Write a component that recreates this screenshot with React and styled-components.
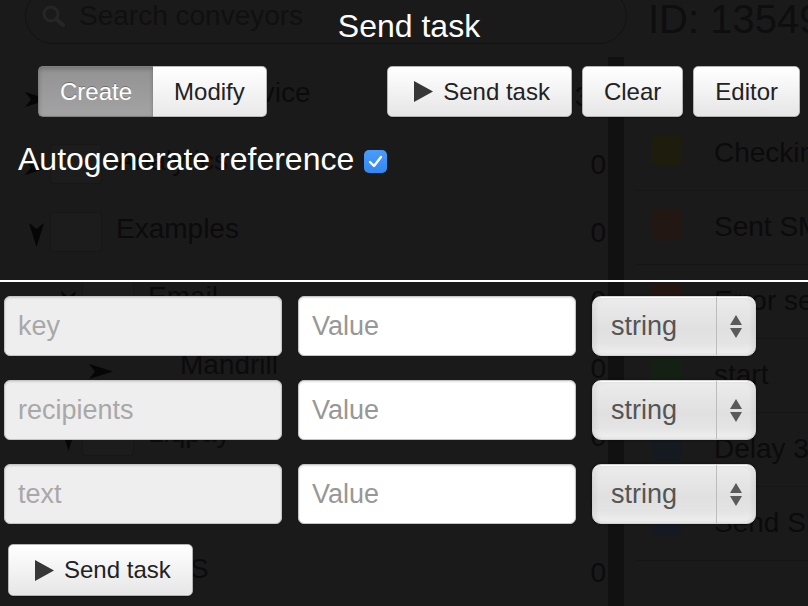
import React from 'react';
import styled, { createGlobalStyle } from 'styled-components';

const GlobalStyle = createGlobalStyle`
  html, body { margin: 0; padding: 0; background: #1a1a1a; }
  body { font-family: "Liberation Sans", Arial, Helvetica, sans-serif; }
  *, *::before, *::after { box-sizing: border-box; }
`;

const Screen = styled.div`
  position: relative;
  width: 808px;
  height: 606px;
  overflow: hidden;
  background: #1a1a1a;
  font-family: "Liberation Sans", Arial, sans-serif;
`;

/* ---------- dimmed application behind the dialog ---------- */

const Shell = styled.div`
  display: grid;
  grid-template-columns: 624px 184px;
  height: 100%;
`;

const LeftPane = styled.div`
  display: flex;
  flex-direction: column;
  min-width: 0;
`;

const SearchBar = styled.div`
  display: flex;
  align-items: center;
  gap: 14px;
  width: 602px;
  height: 56px;
  margin: -12px 0 0 25px;
  padding-left: 16px;
  border: 1px solid #121212;
  border-radius: 28px;
  position: relative;
  z-index: 1;
`;

const SearchText = styled.span`
  font-size: 28px;
  color: #101010;
  white-space: nowrap;
`;

const LeftBody = styled.div`
  display: flex;
  flex: 1;
  margin-top: 13px;
  min-height: 0;
`;

const Tree = styled.div`
  width: 608px;
  padding-top: 2px;
`;

const TreeRow = styled.div`
  display: flex;
  align-items: center;
  height: 68px;
  padding-left: ${(p) => 25 + p.$level * 32}px;
  padding-right: 2px;
  color: #0b0b0b;
  font-size: 28px;
  white-space: nowrap;
`;

const Toggle = styled.span`
  flex: none;
  width: 24px;
  height: 24px;
  margin: 12px 1px 0 0;
  display: flex;
  align-items: center;
  justify-content: center;
  transform: rotate(${(p) => (p.$open ? 90 : 0)}deg);
`;

const Folder = styled.span`
  flex: none;
  width: 52px;
  height: 40px;
  margin: 6px 14px 0 0;
  border-radius: 4px;
  background: ${(p) => (p.$leaf ? 'transparent' : '#1c1c1c')};
  border: 1px solid ${(p) => (p.$leaf ? 'transparent' : '#171717')};
`;

const TreeLabel = styled.span`
  flex: 1;
  min-width: 0;
  overflow: hidden;
`;

const Count = styled.span`
  padding-top: 8px;
`;

const Splitter = styled.div`
  width: 16px;
  background: #111111;
`;

const RightPane = styled.div`
  display: flex;
  flex-direction: column;
  overflow: hidden;
  min-width: 0;
`;

const IdTitle = styled.div`
  padding-left: 24px;
  font-size: 40px;
  line-height: 38px;
  color: #0e0e0e;
  white-space: nowrap;
`;

const StatusList = styled.div`
  margin-top: 79px;
  display: flex;
  flex-direction: column;
`;

const StatusRow = styled.div`
  display: flex;
  align-items: flex-start;
  height: 74px;
  margin-left: 12px;
  padding-left: 16px;
  border-bottom: 1px solid #151515;
  white-space: nowrap;
`;

const StatusSwatch = styled.span`
  flex: none;
  width: 30px;
  height: 30px;
  margin-top: 18px;
  border-radius: 5px;
  background: ${(p) => p.$color};
`;

const StatusLabel = styled.span`
  margin: 20px 0 0 32px;
  font-size: 28px;
  line-height: 32px;
  color: #0b0b0b;
`;

/* ---------- dialog ---------- */

const Overlay = styled.div`
  position: absolute;
  inset: 0;
  display: flex;
  flex-direction: column;
  color: #ffffff;
`;

const DialogHeader = styled.div`
  display: flex;
  flex-direction: column;
  height: 282px;
  border-bottom: 2px solid #ffffff;
`;

const DialogTitle = styled.h1`
  margin: 0;
  padding-left: 10px;
  font-size: 32px;
  font-weight: normal;
  line-height: 52px;
  text-align: center;
`;

const Toolbar = styled.div`
  display: flex;
  justify-content: space-between;
  align-items: center;
  margin-top: 14px;
  padding: 0 8px 0 38px;
`;

const ButtonGroup = styled.div`
  display: flex;
  gap: ${(p) => p.$gap || 0}px;
`;

const SegButton = styled.button`
  height: 51px;
  padding: 0 21px;
  font-family: inherit;
  font-size: 24px;
  cursor: pointer;
  border: 1px solid ${(p) => (p.$active ? '#808080' : '#b9b9b9')};
  color: ${(p) => (p.$active ? '#ffffff' : '#222222')};
  background: ${(p) =>
    p.$active
      ? 'linear-gradient(#929292, #a3a3a3)'
      : 'linear-gradient(#ffffff, #e9e9e9)'};
  box-shadow: ${(p) =>
    p.$active ? 'inset 0 2px 4px rgba(0,0,0,0.22)' : '0 1px 1px rgba(0,0,0,0.3)'};
  text-shadow: ${(p) => (p.$active ? '0 -1px 0 rgba(0,0,0,0.3)' : 'none')};
  &:first-child {
    border-radius: 5px 0 0 5px;
    border-right: none;
  }
  &:last-child {
    border-radius: 0 5px 5px 0;
    border-left: none;
  }
`;

const Button = styled.button`
  display: inline-flex;
  align-items: center;
  gap: 10px;
  height: ${(p) => p.$height || 51}px;
  padding: 0 21px 0 ${(p) => (p.$icon ? 26 : 21)}px;
  font-family: inherit;
  font-size: 24px;
  color: #222222;
  cursor: pointer;
  border: 1px solid #b3b3b3;
  border-radius: 5px;
  background: linear-gradient(#ffffff, #e6e6e6);
  box-shadow: 0 1px 1px rgba(0, 0, 0, 0.35);
`;

const AutoRow = styled.label`
  display: flex;
  align-items: flex-start;
  gap: 10px;
  height: 40px;
  margin-top: 22px;
  padding-left: 18px;
  font-size: 32px;
  line-height: 40px;
`;

const Checkbox = styled.span`
  width: 23px;
  height: 23px;
  margin-top: 11px;
  border-radius: 5px;
  background: linear-gradient(#4a9cfa, #3487f2);
  display: flex;
  align-items: center;
  justify-content: center;
`;

const DialogBody = styled.div`
  display: flex;
  flex-direction: column;
  padding: 14px 0 0 4px;
`;

const FieldRows = styled.div`
  display: flex;
  flex-direction: column;
  gap: 24px;
`;

const FieldRow = styled.div`
  display: grid;
  grid-template-columns: 278px 278px 164px;
  column-gap: 16px;
  height: 60px;
`;

const TextField = styled.input`
  height: 60px;
  width: 100%;
  padding: 0 13px;
  font-family: inherit;
  font-size: 27px;
  color: #333;
  border: 1px solid #c4c4c4;
  border-radius: 6px;
  background: ${(p) => (p.$muted ? '#eeeeee' : '#ffffff')};
  box-shadow: inset 0 1px 2px rgba(0, 0, 0, 0.12);
  outline: none;
  &::placeholder {
    color: ${(p) => (p.$muted ? '#a8a8a8' : '#979797')};
  }
`;

const TypeSelect = styled.div`
  display: flex;
  height: 60px;
  border: 1px solid #d2d2d2;
  border-radius: 9px;
  background: linear-gradient(#ececec 0%, #e0e0e0 55%, #e4e4e4 80%, #f0f0f0 100%);
  box-shadow: inset 0 1px 0 rgba(255, 255, 255, 0.9),
    inset 3px 0 4px rgba(0, 0, 0, 0.05), inset -3px 0 4px rgba(0, 0, 0, 0.05),
    0 0 3px rgba(0, 0, 0, 0.45);
  overflow: hidden;
`;

const SelectControl = styled.select`
  flex: 1;
  min-width: 0;
  height: 100%;
  padding: 0 0 0 18px;
  appearance: none;
  -webkit-appearance: none;
  border: none;
  background: transparent;
  font-family: inherit;
  font-size: 27px;
  color: #555555;
  outline: none;
`;

const SelectArrows = styled.span`
  flex: none;
  width: 39px;
  display: flex;
  align-items: center;
  justify-content: center;
  border-left: 1px solid #bcbcbc;
  pointer-events: none;
`;

const Footer = styled.div`
  display: flex;
  margin: 20px 0 0 4px;
`;

/* ---------- icons ---------- */

const Arrowhead = () => (
  <svg width="24" height="15" viewBox="0 0 24 15">
    <path d="M0 0 L24 7.5 L0 15 L6 7.5 Z" fill="#060606" />
  </svg>
);

const PlayIcon = () => (
  <svg width="19" height="21" viewBox="0 0 19 21">
    <polygon points="0,0 19,10.5 0,21" fill="#373737" />
  </svg>
);

const SearchIcon = () => (
  <svg width="23" height="22" viewBox="0 0 23 22">
    <circle cx="9" cy="9" r="7" fill="none" stroke="#262626" strokeWidth="3" />
    <line x1="14" y1="14" x2="21" y2="20" stroke="#262626" strokeWidth="4" strokeLinecap="round" />
  </svg>
);

const CheckMark = () => (
  <svg width="15" height="13" viewBox="0 0 15 13">
    <path d="M2 7 L6 11 L13 2" fill="none" stroke="#ffffff" strokeWidth="2.4" strokeLinecap="round" strokeLinejoin="round" />
  </svg>
);

const UpDown = () => (
  <svg width="12" height="23" viewBox="0 0 12 23">
    <polygon points="6,0 12,10 0,10" fill="#5a5a5a" />
    <polygon points="0,13 12,13 6,23" fill="#5a5a5a" />
  </svg>
);

/* ---------- data ---------- */

const treeRows = [
  { level: 0, open: false, label: 'Support service', count: '38' },
  { level: 0, open: false, label: 'Analytics', count: '0' },
  { level: 0, open: true, label: 'Examples', count: '0' },
  { level: 1, open: true, label: 'Email', count: '0' },
  { level: 2, open: false, leaf: true, label: 'Mandrill', count: '0' },
  { level: 1, open: true, label: 'Liqpay', count: '0' },
  { level: 2, open: false, leaf: true, label: 'Pay', count: '0' },
  { level: 1, open: false, label: 'SMS', count: '0' },
];

const statuses = [
  { color: '#1e1d0d', label: 'Checking status' },
  { color: '#231714', label: 'Sent SMS' },
  { color: '#251612', label: 'Error sending' },
  { color: '#132013', label: 'start' },
  { color: '#151a21', label: 'Delay 30 sec' },
  { color: '#151a22', label: 'Send SMS' },
];

const fields = ['key', 'recipients', 'text'];

export default function App() {
  return (
    <Screen>
      <GlobalStyle />
      <Shell>
        <LeftPane>
          <SearchBar>
            <SearchIcon />
            <SearchText>Search conveyors</SearchText>
          </SearchBar>
          <LeftBody>
            <Tree>
              {treeRows.map((r) => (
                <TreeRow key={r.label} $level={r.level}>
                  <Toggle $open={r.open}>
                    <Arrowhead />
                  </Toggle>
                  <Folder $leaf={r.leaf} />
                  <TreeLabel>{r.label}</TreeLabel>
                  <Count>{r.count}</Count>
                </TreeRow>
              ))}
            </Tree>
            <Splitter />
          </LeftBody>
        </LeftPane>
        <RightPane>
          <IdTitle>ID: 13549</IdTitle>
          <StatusList>
            {statuses.map((s) => (
              <StatusRow key={s.label}>
                <StatusSwatch $color={s.color} />
                <StatusLabel>{s.label}</StatusLabel>
              </StatusRow>
            ))}
          </StatusList>
        </RightPane>
      </Shell>

      <Overlay>
        <DialogHeader>
          <DialogTitle>Send task</DialogTitle>
          <Toolbar>
            <ButtonGroup>
              <SegButton $active>Create</SegButton>
              <SegButton>Modify</SegButton>
            </ButtonGroup>
            <ButtonGroup $gap={10}>
              <Button $icon>
                <PlayIcon />
                Send task
              </Button>
              <Button>Clear</Button>
              <Button>Editor</Button>
            </ButtonGroup>
          </Toolbar>
          <AutoRow>
            Autogenerate reference
            <Checkbox role="checkbox" aria-checked="true">
              <CheckMark />
            </Checkbox>
          </AutoRow>
        </DialogHeader>

        <DialogBody>
          <FieldRows>
            {fields.map((f) => (
              <FieldRow key={f}>
                <TextField $muted placeholder={f} />
                <TextField placeholder="Value" />
                <TypeSelect>
                  <SelectControl defaultValue="string">
                    <option value="string">string</option>
                    <option value="number">number</option>
                    <option value="boolean">boolean</option>
                  </SelectControl>
                  <SelectArrows>
                    <UpDown />
                  </SelectArrows>
                </TypeSelect>
              </FieldRow>
            ))}
          </FieldRows>
          <Footer>
            <Button $icon $height={52}>
              <PlayIcon />
              Send task
            </Button>
          </Footer>
        </DialogBody>
      </Overlay>
    </Screen>
  );
}
